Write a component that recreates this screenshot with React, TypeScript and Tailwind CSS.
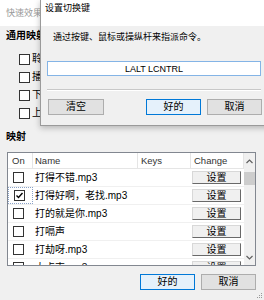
import React from 'react';

type Row = { name: string; ext: string; on?: boolean };

const rows: Row[] = [
  { name: '打得不错', ext: '.mp3' },
  { name: '打得好啊，老找', ext: '.mp3', on: true },
  { name: '打的就是你', ext: '.mp3' },
  { name: '打嗝声', ext: '' },
  { name: '打劫呀', ext: '.mp3' },
  { name: '大点声', ext: '.mp3' },
];

function Box({ checked }: { checked?: boolean }) {
  return (
    <div className="w-[11px] h-[11px] border border-[#333] bg-white flex items-center justify-center">
      {checked && (
        <svg width="9" height="9" viewBox="0 0 9 9">
          <path d="M1.5 4.5 L3.5 6.5 L7.5 2" stroke="#000" strokeWidth="1.4" fill="none" />
        </svg>
      )}
    </div>
  );
}

function WinButton({ label, primary, className }: { label: string; primary?: boolean; className?: string }) {
  return (
    <div
      className={
        'h-[16px] flex items-center justify-center text-[10px] leading-[12px] border ' +
        (primary ? 'bg-[#e5f1fb] border-[#0078d7] ' : 'bg-[#e1e1e1] border-[#adadad] ') +
        (className ?? '')
      }
    >
      {label}
    </div>
  );
}

export default function App() {
  return (
    <div className="relative w-[264px] h-[300px] overflow-hidden bg-[#f0f0f0] text-black font-['Liberation_Sans','Noto_Sans_CJK_SC',sans-serif]">
      {/* 后面的窗口 */}
      <div className="h-[26px] bg-white pl-[6px] pt-[7px] text-[9px] leading-[12px] text-[#9a9a9a]">快速效果</div>
      <div className="pl-[6px] mt-[4px] text-[10px] leading-[12px] font-bold">通用映射</div>
      <div className="mt-[8px] pl-[19px] flex flex-col">
        {['聆', '播', '下', '上'].map((t) => (
          <div key={t} className="h-[18px] flex items-center gap-[2px]">
            <Box />
            <span className="text-[10px] leading-[12px]">{t}</span>
          </div>
        ))}
      </div>
      <div className="pl-[6px] mt-[9px] text-[10px] leading-[12px] font-bold">映射</div>

      {/* 列表 */}
      <div className="ml-[7px] mt-[9px] w-[249px] h-[114px] border border-[#828790] bg-white flex overflow-hidden">
        <div className="flex-1 flex flex-col">
          <div className="h-[16px] shrink-0 flex border-b border-[#e5e5e5] text-[9.5px] leading-[12px] text-[#333]">
            <div className="w-[25px] border-r border-[#e5e5e5] pl-[4px] flex items-center">On</div>
            <div className="w-[105px] border-r border-[#e5e5e5] pl-[2px] flex items-center">Name</div>
            <div className="w-[53px] border-r border-[#e5e5e5] pl-[3px] flex items-center">Keys</div>
            <div className="w-[53px] border-r border-[#e5e5e5] pl-[3px] flex items-center">Change</div>
          </div>
          {rows.map((r, i) => (
            <div key={i} className="h-[18px] shrink-0 flex border-b border-[#f0f0f0] text-[10px] leading-[12px]">
              <div
                className={
                  'w-[25px] flex items-center pl-[5px] ' +
                  (i === 1 ? 'border border-dotted border-[#8aa2c8] pl-[4px]' : '')
                }
              >
                <Box checked={r.on} />
              </div>
              <div className="w-[105px] pl-[2px] flex items-center whitespace-nowrap">
                {r.name}
                {r.ext}
              </div>
              <div className="w-[53px]" />
              <div className="w-[53px] flex items-center pl-[1px]">
                <div className="w-[49px] h-[13px] flex items-center justify-center bg-[#f0f0f0] border border-t-[#d8d8d8] border-l-[#d8d8d8] border-r-[#696969] border-b-[#696969] text-[10px] leading-[12px]">
                  设置
                </div>
              </div>
            </div>
          ))}
        </div>
        {/* 滚动条 */}
        <div className="w-[12px] bg-[#f0f0f0] flex flex-col items-center">
          <div className="h-[16px] flex items-center justify-center">
            <svg width="7" height="5" viewBox="0 0 7 5">
              <path d="M0.5 4 L3.5 1 L6.5 4" stroke="#606060" strokeWidth="1.2" fill="none" />
            </svg>
          </div>
          <div className="mt-[3px] w-[11px] h-[13px] bg-[#cdcdcd]" />
          <div className="mt-auto h-[16px] flex items-center justify-center">
            <svg width="7" height="5" viewBox="0 0 7 5">
              <path d="M0.5 1 L3.5 4 L6.5 1" stroke="#606060" strokeWidth="1.2" fill="none" />
            </svg>
          </div>
        </div>
      </div>

      <div className="mt-[8px] pr-[8px] flex justify-end gap-[6px]">
        <WinButton label="好的" primary className="w-[55px] h-[15px]" />
        <WinButton label="取消" className="w-[55px] h-[15px]" />
      </div>

      {/* 右下角拖拽 */}
      <svg className="absolute right-[1px] bottom-[1px]" width="7" height="7" viewBox="0 0 7 7">
        <rect x="5" y="1" width="1" height="1" fill="#999" />
        <rect x="3" y="3" width="1" height="1" fill="#999" />
        <rect x="5" y="3" width="1" height="1" fill="#999" />
        <rect x="1" y="5" width="1" height="1" fill="#999" />
        <rect x="3" y="5" width="1" height="1" fill="#999" />
        <rect x="5" y="5" width="1" height="1" fill="#999" />
      </svg>

      {/* 设置切换键 对话框 */}
      <div className="absolute left-[40px] top-0 w-[232px] h-[126px] bg-[#f0f0f0] border-l border-b border-[#9a9a9a] shadow-[0_2px_6px_rgba(0,0,0,0.25)] flex flex-col">
        <div className="h-[26px] bg-white pl-[4px] pt-[2px] text-[9px] leading-[12px]">设置切换键</div>
        <div className="mt-[5px] pl-[12px] text-[9px] leading-[12px]">通过按键、鼠标或操纵杆来指派命令。</div>
        <div className="mt-[18px] ml-[6px] w-[214px] h-[15px] bg-white border border-[#84b4e6] flex items-center justify-center text-[9px] leading-[12px]">
          LALT LCNTRL
        </div>
        <div className="mt-[13px] ml-[6px] w-[214px] border-t border-[#c8c8c8] border-b border-b-white" />
        <div className="mt-[8px] ml-[7px] flex">
          <WinButton label="清空" className="w-[56px]" />
          <WinButton label="好的" primary className="w-[55px] ml-[42px]" />
          <WinButton label="取消" className="w-[55px] ml-[6px]" />
        </div>
      </div>
    </div>
  );
}
